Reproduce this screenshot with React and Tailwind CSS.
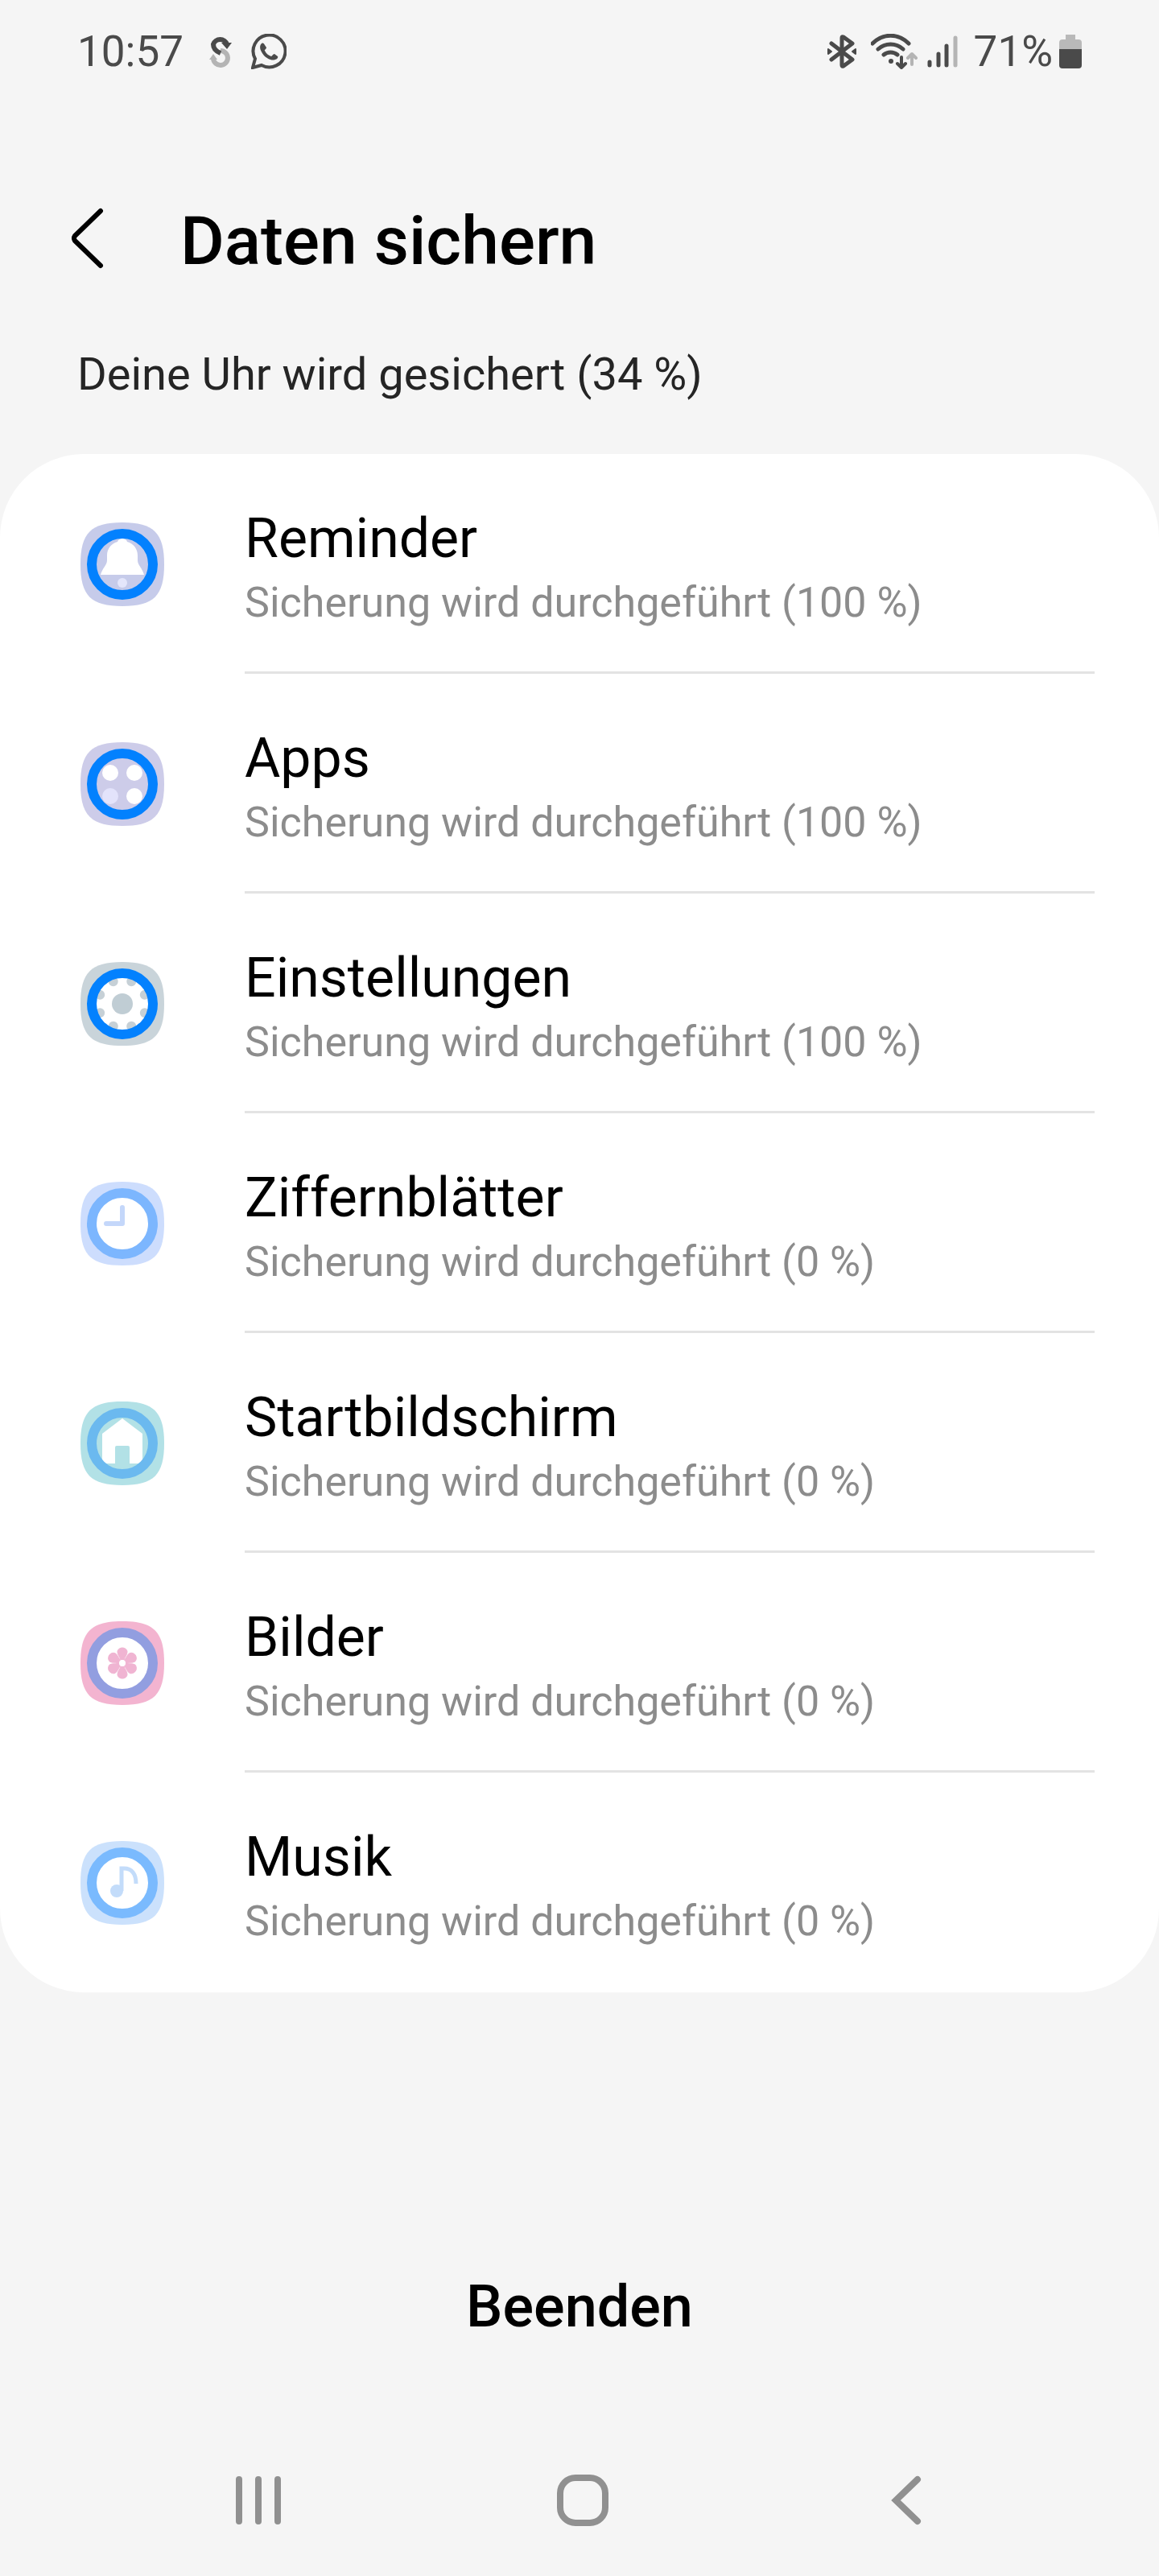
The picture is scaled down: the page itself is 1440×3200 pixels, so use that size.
import React from 'react';

const Squircle = ({ bg, ring, base = bg, label, progress, children }) => (
  <svg
    viewBox="0 0 104 104"
    className="w-[104px] h-[104px] shrink-0"
    role="progressbar"
    aria-label={label}
    aria-valuenow={progress}
  >
    <path d="M52 0C91 0 104 13 104 52C104 91 91 104 52 104C13 104 0 91 0 52C0 13 13 0 52 0Z" fill={bg} />
    <circle cx="52" cy="52" r="33" fill={base} />
    {children}
    <circle cx="52" cy="52" r="38" fill="none" stroke={ring} strokeWidth="12" />
  </svg>
);

const Bell = () => (
  <>
    <path
      d="M52 20C49 20 47 21 46 24C38 26 33 33 33 41V47C33 53 27 57 25 65H79C77 57 71 53 71 47V41C71 33 66 26 58 24C57 21 55 20 52 20Z"
      fill="#fff"
    />
    <circle cx="52" cy="75" r="6" fill="#e4e6fb" />
  </>
);

const Dots = () => (
  <>
    <circle cx="37" cy="38" r="10" fill="#fff" />
    <circle cx="67" cy="38" r="10" fill="#fff" />
    <circle cx="37" cy="67" r="10" fill="#e3e3fb" />
    <circle cx="67" cy="67" r="10" fill="#fff" />
  </>
);

const Gear = () => (
  <>
    <circle cx="52" cy="52" r="13" fill="#c0cdd4" />
    {[22, 68, 112, 158, 202, 248, 292, 338].map((deg) => (
      <circle key={deg} cx="82" cy="52" r="6" fill="#c6d0d6" transform={`rotate(${deg} 52 52)`} />
    ))}
  </>
);

const Clock = () => (
  <path d="M52 32V52H32" fill="none" stroke="#c4d7fa" strokeWidth="6" strokeLinecap="round" strokeLinejoin="round" />
);

const House = () => (
  <>
    <path d="M52 21L77 40V73Q77 77 73 77H31Q27 77 27 73V40Z" fill="#fff" />
    <path d="M43 78V57Q43 55 45 55H59Q61 55 61 57V78Z" fill="#b2e1e6" />
  </>
);

const Flower = () => (
  <>
    {[0, 60, 120, 180, 240, 300].map((deg) => (
      <path
        key={deg}
        d="M50 48C49 44 46 42 46 38C46 35 49 33 52 33C55 33 58 35 58 38C58 42 55 44 54 48Z"
        fill="#f0b4d2"
        stroke="#f0b4d2"
        strokeWidth="1"
        transform={`rotate(${deg} 52 52)`}
      />
    ))}
    <circle cx="52" cy="52" r="4" fill="#fff" />
  </>
);

const Note = () => (
  <>
    <circle cx="45" cy="62" r="8" fill="#c3dcfa" />
    <path d="M51 62V34H54C64 34 69 41 69 53" fill="none" stroke="#c3dcfa" strokeWidth="5" />
  </>
);

const items = [
  { name: 'Reminder', progress: 100, bg: '#c6cbea', ring: '#0381fe', Icon: Bell },
  { name: 'Apps', progress: 100, bg: '#cdcce9', ring: '#0381fe', Icon: Dots },
  { name: 'Einstellungen', progress: 100, bg: '#c9d4da', ring: '#0381fe', base: '#fff', Icon: Gear },
  { name: 'Ziffernblätter', progress: 0, bg: '#cdddfd', ring: '#7cb6fe', base: '#fff', Icon: Clock },
  { name: 'Startbildschirm', progress: 0, bg: '#b2e1e6', ring: '#6bb9ef', Icon: House },
  { name: 'Bilder', progress: 0, bg: '#f3b4d0', ring: '#929ee0', base: '#fff', Icon: Flower },
  { name: 'Musik', progress: 0, bg: '#cbe1fc', ring: '#7abafe', base: '#fff', Icon: Note },
];

const StatusBar = () => (
  <div className="flex items-center justify-between h-32 px-24 text-[53px] leading-none text-[#4a4a4a]">
    <div className="flex items-center">
      <span>10:57</span>
      <svg viewBox="0 0 28 42" className="w-7 h-[42px] ml-8" fill="none" strokeWidth="6">
        <path d="M5 30A9 9 0 1 0 14 20" stroke="#b4b4b4" />
        <path d="M0 31L5 24L10 31Z" fill="#b4b4b4" />
        <path d="M14 23C9 21 5 17 5 12A9 9 0 0 1 22 12" stroke="#4a4a4a" />
        <path d="M15 10H28L22 18Z" fill="#4a4a4a" />
      </svg>
      <svg viewBox="0 0 44 44" className="w-11 h-11 ml-6" fill="none" stroke="#4a4a4a">
        <path d="M2 42L5 31A20 20 0 1 1 13 39Z" strokeWidth="4" strokeLinejoin="miter" />
        <path
          d="M13 12C15 11 16 12 17 14L19 17C19 19 16 20 17 21C19 25 22 27 25 28C26 28 27 25 29 25L33 28C34 29 32 32 30 32C25 34 19 30 16 27C12 22 9 16 13 12Z"
          fill="#4a4a4a"
          stroke="none"
        />
      </svg>
    </div>
    <div className="flex items-center">
      <svg viewBox="0 0 36 42" className="w-9 h-[42px]" fill="none" stroke="#4a4a4a" strokeWidth="5" strokeLinejoin="round" strokeLinecap="round">
        <path d="M5 11L31 31L20 39Q18 40 18 38V4Q18 2 20 3L31 11L5 31" />
        <path d="M1 18L5 21L1 24ZM35 18L31 21L35 24Z" fill="#4a4a4a" strokeWidth="2" />
      </svg>
      <svg viewBox="0 0 58 44" className="w-[58px] h-11 ml-[18px]" fill="none" stroke="#4a4a4a" strokeWidth="4" strokeLinecap="round" strokeLinejoin="round">
        <path d="M2 12C15 -1 34 -1 47 12M9 19C18 11 31 11 40 19M16 26C21 22 28 22 33 26" strokeWidth="5" />
        <circle cx="25" cy="34" r="3" fill="#4a4a4a" stroke="none" />
        <path d="M38 29V42M33 37L38 42L43 37" />
        <path d="M51 38V25M46 30L51 25L56 30" stroke="#b4b4b4" />
      </svg>
      <svg viewBox="0 0 38 42" className="w-[38px] h-[42px] ml-3" stroke="#4a4a4a" strokeWidth="5" strokeLinecap="round">
        <path d="M3 34V38M14 24V38M24 14V38" />
        <path d="M35 4V38" stroke="#b4b4b4" />
      </svg>
      <span className="ml-5">71%</span>
      <svg viewBox="0 0 28 42" className="w-7 h-[42px] ml-2">
        <path d="M8 0H20V6H24Q28 6 28 10V18H0V10Q0 6 4 6H8Z" fill="#b9b9b9" />
        <path d="M0 18H28V38Q28 42 24 42H4Q0 42 0 38Z" fill="#4a4a4a" />
      </svg>
    </div>
  </div>
);

const App = () => {
  return (
    <div className="min-h-screen flex flex-col bg-[#f5f5f5] font-[Roboto,sans-serif] text-black">
      <StatusBar />

      {/* Header */}
      <header className="flex items-center h-[172px] mt-[82px] mb-1.5 pl-[88px] gap-[94px]">
        <button aria-label="Zurück" className="shrink-0">
          <svg viewBox="0 0 42 76" className="w-[42px] h-[76px]" fill="none" stroke="#000" strokeWidth="6" strokeLinecap="round" strokeLinejoin="round">
            <path d="M37 4L5 35Q3 38 5 41L37 72" />
          </svg>
        </button>
        <h1 className="pt-2 text-[84px] leading-[100px] font-medium">Daten sichern</h1>
      </header>

      <p className="h-44 pt-11 px-24 text-[56px] leading-[66px] text-[#252525]">Deine Uhr wird gesichert (34 %)</p>

      <ul className="bg-white rounded-[104px]">
        {items.map(({ name, progress, Icon, ...colors }, idx) => (
          <li key={name} className="flex items-center h-[273px] pl-[100px] pr-20 gap-[100px]">
            <Squircle label={name} progress={progress} {...colors}>
              <Icon />
            </Squircle>
            <div
              className={`flex-1 h-full pt-16 border-b-3 ${idx < items.length - 1 ? 'border-[#e3e3e3]' : 'border-transparent'}`}
            >
              <h2 className="text-[68px] leading-[82px]">{name}</h2>
              <p className="text-[52px] leading-[78px] text-[#8c8c8c]">Sicherung wird durchgeführt ({progress} %)</p>
            </div>
          </li>
        ))}
      </ul>

      <div className="flex-1 flex flex-col justify-end">
        <button className="self-center mb-24 px-8 text-[72px] leading-[100px] font-medium">Beenden</button>
        <nav className="grid grid-cols-3 justify-items-center items-center h-[188px] pl-30 pr-28">
          <button aria-label="Letzte Apps">
            <svg viewBox="0 0 64 64" className="w-16 h-16" stroke="#909090" strokeWidth="8" strokeLinecap="round">
              <path d="M8 6V58M32 6V58M56 6V58" />
            </svg>
          </button>
          <button aria-label="Startseite">
            <svg viewBox="0 0 64 64" className="w-16 h-16" fill="none" stroke="#909090" strokeWidth="8">
              <rect x="4" y="4" width="56" height="56" rx="19" />
            </svg>
          </button>
          <button aria-label="Zurück">
            <svg viewBox="0 0 64 64" className="w-16 h-16" fill="none" stroke="#909090" strokeWidth="8" strokeLinecap="round">
              <path d="M45 6L18 32L45 58" />
            </svg>
          </button>
        </nav>
      </div>
    </div>
  );
};

export default App;
